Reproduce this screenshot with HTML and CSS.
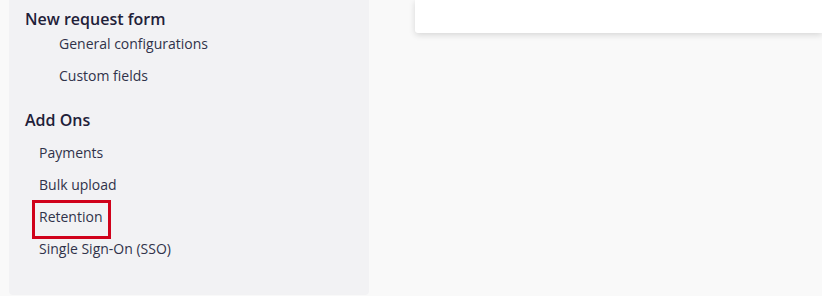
FILE: index.html
```html
<!DOCTYPE html>
<html lang="en">
<head>
<meta charset="utf-8">
<title>Settings</title>
<link rel="stylesheet" href="styles.css">
</head>
<body>
<div class="page">
  <aside class="sidebar">
    <section class="section">
      <h2 class="section-title">New request form</h2>
      <ul class="menu menu-nested">
        <li class="menu-item">General configurations</li>
        <li class="menu-item">Custom fields</li>
      </ul>
    </section>
    <section class="section section-addons">
      <h2 class="section-title">Add Ons</h2>
      <ul class="menu menu-flat">
        <li class="menu-item">Payments</li>
        <li class="menu-item">Bulk upload</li>
        <li class="menu-item highlight">Retention</li>
        <li class="menu-item">Single Sign-On (SSO)</li>
      </ul>
    </section>
  </aside>
  <main class="content">
    <div class="card"></div>
  </main>
</div>
</body>
</html>
```
FILE: styles.css
```css
* { box-sizing: border-box; }

html, body {
  margin: 0;
  padding: 0;
  background: #f9f9f9;
  font-family: "Open Sans", "Noto Sans", sans-serif;
}

.page {
  display: flex;
  align-items: flex-start;
  padding-left: 9px;
  gap: 46px;
}

.sidebar {
  width: 360px;
  flex: none;
  background: #f2f2f4;
  border-radius: 0 0 4px 4px;
  padding: 8px 16px 37px 16px;
}

.section-title {
  margin: 0;
  font-size: 16px;
  line-height: 22px;
  font-weight: 600;
  color: #1f2139;
}

.section-addons {
  margin-top: 24px;
}

.menu {
  list-style: none;
  margin: 4px 0 0;
  padding: 0;
  display: flex;
  flex-direction: column;
  gap: 13px;
}

.menu-nested { padding-left: 34px; }

.menu-flat {
  margin-top: 12px;
  padding-left: 14px;
}

.menu-item {
  font-size: 14px;
  line-height: 19px;
  color: #30324a;
}

.highlight {
  position: relative;
  width: fit-content;
}

.highlight::after {
  content: "";
  position: absolute;
  top: -7px;
  bottom: -13px;
  left: -7px;
  right: -9px;
  border: 3px solid #d0021b;
}

.content {
  flex: 1;
  min-width: 0;
}

.card {
  height: 33px;
  background: #ffffff;
  border-radius: 0 0 0 3px;
  box-shadow: 0 2px 6px rgba(0, 0, 0, 0.14);
}
```
